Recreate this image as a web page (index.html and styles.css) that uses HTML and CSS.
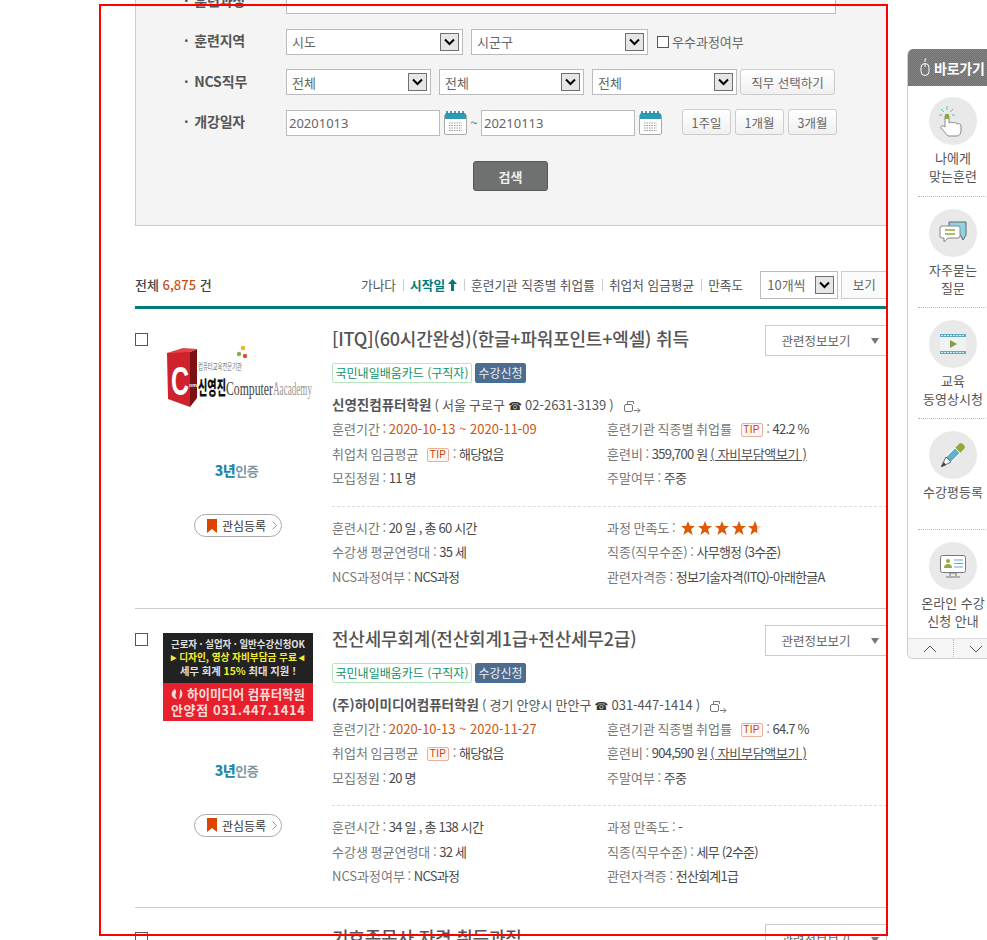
FILE: index.html
```html
<!DOCTYPE html>
<html lang="ko">
<head>
  <meta charset="UTF-8" />
  <meta name="viewport" content="width=device-width, initial-scale=1.0"/>
  <title>훈련과정 검색</title>
  <link rel="stylesheet" href="styles.css">
</head>
<body>

  <div class="page">

    <!-- 검색 조건 -->
    <div class="search">
      <div class="search-row">
        <span class="search-label">· 훈련과정</span>
        <input class="text-input wide" type="text">
      </div>
      <div class="search-row">
        <span class="search-label">· 훈련지역</span>
        <div class="sel sel-l"><span>시도</span><svg class="sel-arrow" width="19" height="18"><use href="#arrow-box"/></svg></div>
        <div class="sel sel-l"><span>시군구</span><svg class="sel-arrow" width="19" height="18"><use href="#arrow-box"/></svg></div>
        <label class="check-label"><i class="check small"></i>우수과정여부</label>
      </div>
      <div class="search-row">
        <span class="search-label">· NCS직무</span>
        <div class="sel sel-m"><span>전체</span><svg class="sel-arrow" width="19" height="18"><use href="#arrow-box"/></svg></div>
        <div class="sel sel-m"><span>전체</span><svg class="sel-arrow" width="19" height="18"><use href="#arrow-box"/></svg></div>
        <div class="sel sel-m"><span>전체</span><svg class="sel-arrow" width="19" height="18"><use href="#arrow-box"/></svg></div>
        <button class="btn btn-job">직무 선택하기</button>
      </div>
      <div class="search-row">
        <span class="search-label">· 개강일자</span>
        <input class="text-input date" type="text" value="20201013">
        <svg class="cal" width="23" height="24"><use href="#calendar"/></svg>
        <span class="tilde">~</span>
        <input class="text-input date" type="text" value="20210113">
        <svg class="cal" width="23" height="24"><use href="#calendar"/></svg>
        <div class="range-btns">
          <button class="btn btn-range">1주일</button>
          <button class="btn btn-range">1개월</button>
          <button class="btn btn-range">3개월</button>
        </div>
      </div>
      <div class="search-submit"><button class="btn-search">검색</button></div>
    </div>

    <!-- 정렬 -->
    <div class="toolbar">
      <div class="total">전체 <em>6,875</em> 건</div>
      <ul class="sort">
        <li>가나다</li>
        <li class="on">시작일<svg width="9" height="12" viewBox="0 0 9 12"><path d="M4.5 0 9 5H6v7H3V5H0z" fill="#007b7b"/></svg></li>
        <li>훈련기관 직종별 취업률</li>
        <li>취업처 임금평균</li>
        <li>만족도</li>
      </ul>
      <div class="sel sel-count"><span>10개씩</span><svg class="sel-arrow" width="19" height="18"><use href="#arrow-box"/></svg></div>
      <button class="btn btn-view">보기</button>
    </div>

    <!-- 과정 목록 -->
    <div class="list">

      <div class="item">
        <div class="item-left">
          <i class="check"></i>
          <div class="thumb-col">
            <svg class="thumb" width="150" height="88" viewBox="0 0 150 88">
              <path d="M4 20 27 17V74L5 66Z" fill="#d0222c"/>
              <path d="M27 19 34 16V65L27 74Z" fill="#7c1015"/>
              <path d="M4 20 20 15 34 16 27 19Z" fill="#e0444a"/>
              <text x="8" y="62" class="logo-c" textLength="18" lengthAdjust="spacingAndGlyphs">C</text>
              <text x="26" y="54" class="logo-com" textLength="8" lengthAdjust="spacingAndGlyphs">om</text>
              <text x="35" y="37" class="logo-small" textLength="44" lengthAdjust="spacingAndGlyphs">컴퓨터교육전문기관</text>
              <circle cx="76" cy="21" r="2.200" fill="#7fb44a"/><circle cx="80" cy="15" r="2.200" fill="#f0b030"/><circle cx="82" cy="23" r="2.200" fill="#e0502a"/>
              <text x="35" y="62" class="logo-name" textLength="28" lengthAdjust="spacingAndGlyphs">신영진</text>
              <text x="63" y="62" class="logo-en" textLength="47" lengthAdjust="spacingAndGlyphs">Computer</text>
              <text x="110" y="62" class="logo-en2" textLength="39" lengthAdjust="spacingAndGlyphs">Aacademy</text>
            </svg>
            <div class="cert"><b>3년</b>인증</div>
            <a class="pill"><svg width="10" height="14" viewBox="0 0 10 14"><path d="M0 0H10V14L5 10 0 14Z" fill="#dd4400"/></svg>관심등록<svg class="pill-arrow" width="5" height="9" viewBox="0 0 5 9"><path d="M.5.5 4.5 4.5.5 8.5" fill="none" stroke="#999"/></svg></a>
          </div>
        </div>
        <div class="item-body">
          <div class="item-head">
            <h3 class="item-title">[ITQ](60시간완성)(한글+파워포인트+엑셀) 취득</h3>
            <button class="btn-related">관련정보보기<i></i></button>
          </div>
          <div class="tags"><span class="tag tag-card">국민내일배움카드 (구직자)</span><span class="tag tag-apply">수강신청</span></div>
          <div class="inst"><b>신영진컴퓨터학원</b> ( 서울 구로구 <span class="tel">☎</span> 02-2631-3139 )<svg class="go" width="18" height="13"><use href="#go-link"/></svg></div>
          <div class="info">
            <div>훈련기간 : <span class="date-val">2020-10-13 ~ 2020-11-09</span></div>
            <div>훈련기관 직종별 취업률 <i class="tip">TIP</i> : <span class="val">42.2 %</span></div>
            <div>취업처 임금평균 <i class="tip">TIP</i> : <span class="val">해당없음</span></div>
            <div>훈련비 : <span class="val">359,700 원</span> <u>( 자비부담액보기 )</u></div>
            <div>모집정원 : <span class="val">11 명</span></div>
            <div>주말여부 : <span class="val">주중</span></div>
          </div>
          <div class="info info-more">
            <div>훈련시간 : <span class="val">20 일 , 총 60 시간</span></div>
            <div class="stars-row">과정 만족도 :
              <svg class="stars" width="82" height="14" viewBox="0 0 82 14">
                <defs><linearGradient id="half"><stop offset="65%" stop-color="#dd5a08"/><stop offset="65%" stop-color="#ddd"/></linearGradient></defs>
                <use href="#star" fill="#dd5a08"/><use href="#star" x="17" fill="#dd5a08"/><use href="#star" x="34" fill="#dd5a08"/><use href="#star" x="51" fill="#dd5a08"/><use href="#star" x="67" fill="url(#half)"/>
              </svg>
            </div>
            <div>수강생 평균연령대 : <span class="val">35 세</span></div>
            <div>직종(직무수준) : <span class="val">사무행정 (3수준)</span></div>
            <div>NCS과정여부 : <span class="val">NCS과정</span></div>
            <div>관련자격증 : <span class="val">정보기술자격(ITQ)-아래한글A</span></div>
          </div>
        </div>
      </div>

      <div class="item">
        <div class="item-left">
          <i class="check"></i>
          <div class="thumb-col">
            <svg class="thumb" width="150" height="88" viewBox="0 0 150 88">
              <rect width="150" height="50" fill="#222"/>
              <rect y="50" width="150" height="38" fill="#e8202e"/>
              <text x="8" y="15" class="ad ad-w" textLength="134" lengthAdjust="spacingAndGlyphs">근로자 · 실업자 · 일반수강신청OK</text>
              <text x="8" y="28" class="ad ad-y" textLength="134" lengthAdjust="spacingAndGlyphs">▸ 디자인, 영상 자비부담금 무료 ◂</text>
              <text x="17" y="42" class="ad ad-w" textLength="116" lengthAdjust="spacingAndGlyphs">세무 회계 <tspan fill="#f4ee30">15%</tspan> 최대 지원 !</text>
              <path d="M12 56c-3 2-4 4-3 7 1 2 3 3 5 3-2-2-2-5-1-6 0-2 0-3-1-4zM17 56c2 2 3 4 2 7-1 2-2 3-3 3 1-3 1-7 1-10z" fill="#f8dcd8"/>
              <text x="24" y="66" class="ad ad-big" textLength="118" lengthAdjust="spacingAndGlyphs">하이미디어 컴퓨터학원</text>
              <text x="8" y="82" class="ad ad-big" textLength="134" lengthAdjust="spacing">안양점 031.447.1414</text>
            </svg>
            <div class="cert"><b>3년</b>인증</div>
            <a class="pill"><svg width="10" height="14" viewBox="0 0 10 14"><path d="M0 0H10V14L5 10 0 14Z" fill="#dd4400"/></svg>관심등록<svg class="pill-arrow" width="5" height="9" viewBox="0 0 5 9"><path d="M.5.5 4.5 4.5.5 8.5" fill="none" stroke="#999"/></svg></a>
          </div>
        </div>
        <div class="item-body">
          <div class="item-head">
            <h3 class="item-title">전산세무회계(전산회계1급+전산세무2급)</h3>
            <button class="btn-related">관련정보보기<i></i></button>
          </div>
          <div class="tags"><span class="tag tag-card">국민내일배움카드 (구직자)</span><span class="tag tag-apply">수강신청</span></div>
          <div class="inst"><b>(주)하이미디어컴퓨터학원</b> ( 경기 안양시 만안구 <span class="tel">☎</span> 031-447-1414 )<svg class="go" width="18" height="13"><use href="#go-link"/></svg></div>
          <div class="info">
            <div>훈련기간 : <span class="date-val">2020-10-13 ~ 2020-11-27</span></div>
            <div>훈련기관 직종별 취업률 <i class="tip">TIP</i> : <span class="val">64.7 %</span></div>
            <div>취업처 임금평균 <i class="tip">TIP</i> : <span class="val">해당없음</span></div>
            <div>훈련비 : <span class="val">904,590 원</span> <u>( 자비부담액보기 )</u></div>
            <div>모집정원 : <span class="val">20 명</span></div>
            <div>주말여부 : <span class="val">주중</span></div>
          </div>
          <div class="info info-more">
            <div>훈련시간 : <span class="val">34 일 , 총 138 시간</span></div>
            <div>과정 만족도 : <span class="val">-</span></div>
            <div>수강생 평균연령대 : <span class="val">32 세</span></div>
            <div>직종(직무수준) : <span class="val">세무 (2수준)</span></div>
            <div>NCS과정여부 : <span class="val">NCS과정</span></div>
            <div>관련자격증 : <span class="val">전산회계1급</span></div>
          </div>
        </div>
      </div>

      <div class="item">
        <div class="item-left"><i class="check"></i></div>
        <div class="item-body">
          <div class="item-head">
            <h3 class="item-title">기호종목사 자격 취득과정</h3>
            <button class="btn-related">관련정보보기<i></i></button>
          </div>
        </div>
      </div>

    </div>
  </div>

  <!-- 바로가기 -->
  <div class="quick">
    <div class="quick-head">
      <svg width="10" height="19" viewBox="0 0 10 19"><path d="M5 4V1.5C5 .8 6 .5 6.5 1M1 9.5a4 4 0 0 1 8 0v4a4 4 0 0 1-8 0zM5 6v3" fill="none" stroke="#fff"/></svg>
      바로가기
    </div>
    <div class="quick-item">
      <div class="quick-icon">
        <svg width="34" height="34" viewBox="0 0 34 34">
          <path d="M11 2v4M5 5l3 3M17 5l-3 3M3 11h3M19 11h-3" stroke="#5fb7cc" fill="none"/>
          <path d="M9 13c0-3 4-3 4 0v6c2-1 3-1 4 0 2-1 3-1 4 1 2-1 4 0 4 2v5c0 3-2 5-4 5H12c-2-2-5-6-7-8-1-2 2-3 4-1z" fill="#fff" stroke="#888"/>
          <rect x="9" y="10" width="4" height="5" fill="#95a83c"/>
        </svg>
      </div>
      <p>나에게<br>맞는훈련</p>
    </div>
    <div class="quick-item">
      <div class="quick-icon">
        <svg width="28" height="24" viewBox="0 0 28 24">
          <path d="M10 1H27V14L24 19 21 13H10z" fill="#8ed2e4" stroke="#666"/>
          <path d="M3 5H19a2 2 0 0 1 2 2V15a2 2 0 0 1-2 2H9L5 21V17H3a2 2 0 0 1-2-2V7a2 2 0 0 1 2-2z" fill="#fff" stroke="#888"/>
          <path d="M6 9H16M6 13H16" stroke="#95a83c" stroke-width="1.4"/>
        </svg>
      </div>
      <p>자주묻는<br>질문</p>
    </div>
    <div class="quick-item">
      <div class="quick-icon">
        <svg width="26" height="20" viewBox="0 0 26 20">
          <rect width="26" height="20" fill="#5fa9c4"/>
          <rect y="3" width="26" height="14" fill="#eef2f2"/>
          <path d="M1 1.5H25M1 18.5H25" stroke="#d6eaf0" stroke-dasharray="2 1"/>
          <path d="M10 6 17 10 10 14z" fill="#8a9a3c"/>
        </svg>
      </div>
      <p>교육<br>동영상시청</p>
    </div>
    <div class="quick-item">
      <div class="quick-icon">
        <svg width="24" height="24" viewBox="0 0 24 24">
          <path d="M14 5 19 0c3 0 5 3 5 5l-5 5z" fill="#95a83c"/>
          <path d="M5 14 14 5 19 10 10 19z" fill="#5fb0cc" stroke="#fff"/>
          <path d="M5 14 10 19 0 24z" fill="#fff" stroke="#666"/>
          <path d="M0 24 3 19 5 22z" fill="#444"/>
        </svg>
      </div>
      <p>수강평등록</p>
    </div>
    <div class="quick-item">
      <div class="quick-icon">
        <svg width="26" height="23" viewBox="0 0 26 23">
          <rect x=".5" y=".5" width="25" height="17" rx="2" fill="#fff" stroke="#777"/>
          <path d="M10 21V18H16V21M6 22H20" stroke="#777" fill="none"/>
          <circle cx="8" cy="6" r="2" fill="#95a83c"/>
          <path d="M4 13c0-3 2-4 4-4s4 1 4 4z" fill="#95a83c"/>
          <path d="M14 5H23M14 8.500H23M14 12H23" stroke="#5fb0cc" stroke-width="1.200"/>
        </svg>
      </div>
      <p>온라인 수강<br>신청 안내</p>
    </div>
    <div class="quick-arrows">
      <span><svg width="14" height="8" viewBox="0 0 14 8"><path d="M1 7 7 1 13 7" fill="none" stroke="#555"/></svg></span>
      <span><svg width="14" height="8" viewBox="0 0 14 8"><path d="M1 1 7 7 13 1" fill="none" stroke="#555"/></svg></span>
    </div>
  </div>

  <div class="frame"></div>

  <!-- 공통 아이콘 -->
  <svg class="defs" width="0" height="0">
    <defs>
      <g id="arrow-box">
        <rect x=".5" y=".5" width="18" height="17" fill="#e6e6e6" stroke="#707070"/>
        <path d="M5 6.500 9.500 11 14 6.500" fill="none" stroke="#000" stroke-width="2"/>
      </g>
      <g id="calendar">
        <rect x=".5" y="3.500" width="22" height="20" rx="1.500" fill="#fff" stroke="#aaa"/>
        <path d="M1 8V4a2 2 0 0 1 2-2H20a2 2 0 0 1 2 2V8z" fill="#2f9ab5"/>
        <path d="M3 0V3M7 0V3M11 0V3M15 0V3M19 0V3" stroke="#1f7f98" stroke-width="1.500"/>
        <path d="M5 12H18M5 14.500H18M5 17H18M5 19.500H18" stroke="#999" stroke-dasharray="1.500 1"/>
      </g>
      <g id="go-link">
        <rect x="1.500" y="4.500" width="8" height="7" rx="1.500" fill="none" stroke="#777"/>
        <path d="M4.500 4V1.500H10.500V4M11 10.500H17M14.500 8 17 10.500 14.500 13" fill="none" stroke="#777"/>
      </g>
      <path id="star" d="M7 0 9 5H14L10 8.300 11.600 14 7 10.700 2.400 14 4 8.300 0 5H5z"/>
    </defs>
  </svg>

</body>
</html>
```

FILE: styles.css
```css
html, body {
  height: 940px;
  overflow: hidden;
}

body {
  margin: 0;
  background: #fff;
  font-family: "Noto Sans CJK KR", "Noto Sans", sans-serif;
  font-size: 13px;
  color: #777;
}

.page {
  width: 752px;
  height: 940px;
  margin-left: 135px;
  overflow: hidden;
}

/* 검색 */
.search {
  margin-top: -40px;
  height: 266px;
  box-sizing: border-box;
  padding-top: 28px;
  background: #f4f4f4;
  border: 1px solid #ccc;
  border-right: 0;
  border-top: 0;
}

.search-row {
  display: flex;
  align-items: center;
  height: 26px;
  margin-bottom: 14.500px;
}

.search-label {
  width: 102px;
  padding-left: 48px;
  margin-top: -3px;
  font-size: 14px;
  font-weight: 700;
  letter-spacing: -.15px;
  word-spacing: 2px;
  color: #555;
  white-space: pre;
}

.text-input {
  height: 26px;
  box-sizing: border-box;
  border: 1px solid #bbb;
  background: #fff;
  padding: 0 2px;
  font: 13px "Noto Sans", sans-serif;
  color: #666;
  outline: 0;
}

.wide { width: 550px; }
.date { width: 154px; }

.sel {
  display: flex;
  align-items: center;
  justify-content: space-between;
  height: 26px;
  box-sizing: border-box;
  border: 1px solid #bbb;
  background: #fff;
  padding: 0 3px 0 5px;
  font-size: 13px;
  color: #666;
  margin-right: 8px;
}

.sel-arrow { flex: none; }
.sel-l { width: 177px; }
.sel-m { width: 145px; }

.check-label {
  display: flex;
  align-items: center;
  font-size: 13px;
  color: #666;
  margin-left: 1px;
}

.check {
  display: block;
  flex: none;
  width: 13px;
  height: 13px;
  box-sizing: border-box;
  border: 1px solid #555;
  background: #fff;
}

.check.small {
  width: 12px;
  height: 12px;
  margin-right: 3px;
}

.btn {
  height: 26px;
  box-sizing: border-box;
  border: 1px solid #ccc;
  border-radius: 3px;
  background: linear-gradient(#fff, #f0f0f0);
  font: 12.500px "Noto Sans CJK KR", sans-serif;
  color: #666;
  padding: 0;
}

.btn-job { width: 95px; margin-left: -5px; }
.btn-range { width: 49px; }

.range-btns {
  display: flex;
  gap: 4px;
  margin-left: 20px;
  margin-top: -1px;
}

.cal { margin-left: 4px; flex: none; }

.tilde {
  width: 14px;
  text-align: center;
  color: #666;
}

.search-submit {
  display: flex;
  justify-content: center;
  padding-top: 11px;
  width: 751px;
}

.btn-search {
  width: 75px;
  height: 30px;
  margin-left: -2px;
  border: 1px solid #555;
  border-radius: 3px;
  background: #6f7171;
  color: #eee;
  font: 700 13px "Noto Sans CJK KR", sans-serif;
}

/* 정렬 */
.toolbar {
  display: flex;
  align-items: center;
  height: 83px;
  box-sizing: border-box;
  padding-top: 44px;
  padding-bottom: 7px;
  border-bottom: 3px solid #007b7b;
}

.total {
  width: 226px;
  flex: none;
  font-weight: 500;
  color: #444;
}

.total em {
  font-style: normal;
  color: #c8500f;
}

.sort {
  display: flex;
  align-items: center;
  flex: none;
  margin: 0;
  padding: 0;
  list-style: none;
  color: #555;
  font-size: 12.700px;
  white-space: nowrap;
}

.sort li + li {
  margin-left: 7px;
  padding-left: 7px;
  background: linear-gradient(#ccc, #ccc) no-repeat 0 55% / 1px 12px;
}

.sort .on {
  display: flex;
  align-items: center;
  gap: 3px;
  font-weight: 700;
  color: #007b7b;
}

.sel-count {
  width: 78px;
  height: 28px;
  flex: none;
  margin-left: 17px;
  margin-right: 3px;
  padding-left: 6px;
  font-size: 13px;
}

.btn-view {
  width: 46px;
  height: 28px;
  flex: none;
  border-radius: 0;
  background: #fafafa;
}

/* 목록 */
.item {
  display: flex;
  height: 299.500px;
  box-sizing: border-box;
  padding-top: 16px;
  border-bottom: 1px solid #ccc;
}

.item-left {
  display: flex;
  width: 197px;
  flex: none;
  padding-top: 8px;
  box-sizing: border-box;
}

.thumb-col {
  display: flex;
  flex-direction: column;
  align-items: center;
  width: 150px;
  margin-left: 15px;
}

.thumb { display: block; flex: none; }

.logo-c { font: 700 40px "Liberation Sans", sans-serif; fill: #fff; }
.logo-com { font: 700 6px "Liberation Sans", sans-serif; fill: #fff; }
.logo-small { font: 9px "Noto Sans CJK KR", sans-serif; fill: #777; }
.logo-name { font: 900 19px "Noto Sans CJK KR", sans-serif; fill: #111; }
.logo-en { font: 19px "Liberation Serif", serif; fill: #444; }
.logo-en2 { font: 19px "Liberation Serif", serif; fill: #999; }

.ad { font-family: "Noto Sans CJK KR", sans-serif; font-weight: 700; font-size: 10.500px; }
.ad-w { fill: #e0e0e0; }
.ad-y { fill: #f4ee30; }
.ad-big { fill: #f8dcd8; font-size: 13px; }

.cert {
  height: 20px;
  margin-top: 39px;
  margin-right: 3px;
  font-size: 13px;
  line-height: 20px;
  font-weight: 700;
  letter-spacing: -.5px;
  color: #7d97a5;
}

.cert b { color: #1f86a8; font-size: 14px; }

.pill {
  display: flex;
  align-items: center;
  gap: 5px;
  width: 88px;
  height: 23px;
  margin-top: 34px;
  box-sizing: border-box;
  padding-left: 12px;
  border: 1px solid #aaa;
  border-radius: 12px;
  background: #fff;
  font-size: 12px;
  color: #333;
}

.pill-arrow { margin-left: 1px; }

.item-body {
  flex: 1;
  min-width: 0;
}

.item-head {
  display: flex;
  justify-content: space-between;
  height: 31px;
}

.item-title {
  margin: 0;
  font-size: 18px;
  font-weight: 500;
  line-height: 27px;
  letter-spacing: -.2px;
  color: #555;
}

.btn-related {
  position: relative;
  width: 122px;
  height: 31px;
  box-sizing: border-box;
  flex: none;
  padding: 0 20px 0 0;
  border: 1px solid #ccc;
  background: #fff;
  font: 12.500px "Noto Sans CJK KR", sans-serif;
  color: #666;
}

.btn-related i {
  position: absolute;
  right: 7px;
  top: 12px;
  border: 4px solid transparent;
  border-top: 6px solid #777;
  border-bottom: 0;
}

.tags {
  display: flex;
  gap: 3px;
  margin-top: 7px;
}

.tag {
  height: 20px;
  box-sizing: border-box;
  border-radius: 2px;
  line-height: 18px;
  font-size: 12px;
  text-align: center;
}

.tag-card {
  width: 140px;
  border: 1px solid #b6e6bc;
  color: #0c9266;
}

.tag-apply {
  width: 51px;
  border: 1px solid #3f6f9f;
  background: #4d6c8e;
  color: #e8eef4;
}

.inst {
  height: 25px;
  margin-top: 9px;
  line-height: 25px;
  color: #555;
  white-space: pre;
  word-spacing: -.5px;
}

.inst b { font-weight: 700; font-size: 13.500px; word-spacing: 0; }

.tel { color: #333; font: 11px "DejaVu Sans", sans-serif; }
.go { margin-left: 9px; vertical-align: -3px; }

.info {
  display: grid;
  grid-template-columns: 275px 1fr;
  grid-auto-rows: 24.500px;
  line-height: 24.500px;
  white-space: nowrap;
  word-spacing: -1px;
}

.info-more {
  margin-top: 15px;
  padding-top: 9px;
  border-top: 1px dashed #ddd;
}

.val {
  color: #4a4a4a;
  letter-spacing: -.75px;
  word-spacing: 0;
}

.date-val {
  color: #cc5510;
  word-spacing: 0;
}

.info u {
  color: #555;
  letter-spacing: -.3px;
  word-spacing: 0;
}

.tip {
  display: inline-block;
  width: 22px;
  height: 14px;
  margin: 0 1px 0 6px;
  box-sizing: border-box;
  border: 1px solid #e8b09a;
  border-radius: 2px;
  background: #fff6f1;
  font: 10px/12px "Liberation Sans", sans-serif;
  letter-spacing: .4px;
  color: #c8400a;
  text-align: center;
  vertical-align: 1px;
}

.stars { vertical-align: -2px; margin-left: 3px; }

/* 바로가기 */
.quick {
  position: absolute;
  left: 907px;
  top: 49px;
  width: 92px;
  height: 610px;
  box-sizing: border-box;
  border: 1px solid #ccc;
  border-top: 0;
  border-radius: 6px;
  background: #fff;
  overflow: hidden;
}

.quick-head {
  display: flex;
  align-items: center;
  gap: 4px;
  height: 37px;
  box-sizing: border-box;
  padding-left: 12px;
  background: repeating-conic-gradient(#808080 0 25%, #747474 0 50%) 0 0 / 2px 2px;
  color: #fff;
  font-size: 14px;
  font-weight: 700;
  letter-spacing: -.2px;
}

.quick-item {
  height: 110px;
  box-sizing: border-box;
  padding-top: 11px;
  text-align: center;
}

.quick-item + .quick-item {
  height: 111px;
  padding: 12px 10px 0 0;
  margin-left: 10px;
  border-top: 1px dotted #bbb;
}

.quick-icon {
  display: flex;
  align-items: center;
  justify-content: center;
  width: 48px;
  height: 48px;
  margin: 0 auto;
  border-radius: 50%;
  background: #e9e9e9;
}

.quick-item p {
  margin: 4px 0 0;
  font-size: 13px;
  line-height: 17.500px;
  color: #555;
}

.quick-item + .quick-item p { margin-left: -3px; margin-right: -3px; }

.quick-arrows {
  display: flex;
  height: 20px;
  margin-top: -2px;
  border-top: 1px solid #ddd;
  background: #f5f5f5;
}

.quick-arrows span {
  display: flex;
  align-items: center;
  justify-content: center;
  width: 45px;
}

.quick-arrows span + span {
  border-left: 1px dotted #bbb;
}

.frame {
  position: absolute;
  left: 99px;
  top: 4px;
  width: 785px;
  height: 928px;
  border: 2px solid #f00;
  pointer-events: none;
}

.defs { position: absolute; }
```
